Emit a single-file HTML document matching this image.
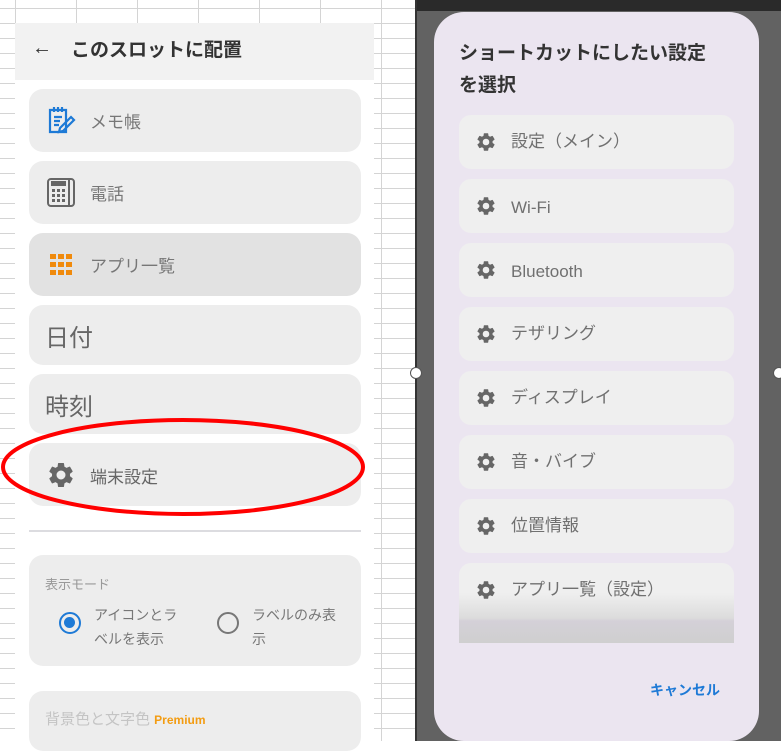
<!DOCTYPE html>
<html><head><meta charset="utf-8"><style>
*{margin:0;padding:0;box-sizing:border-box}
body{width:781px;height:741px;overflow:hidden;position:relative;background:#fff;font-family:"Liberation Sans","Noto Sans CJK JP",sans-serif}
.grid{position:absolute;left:0;top:0;width:417px;height:741px;
background-image:linear-gradient(#d4d4d4 1px,transparent 1px),linear-gradient(90deg,#d4d4d4 1px,transparent 1px);
background-size:100% 15px,61px 100%;background-position:0 8px,15px 0}
.panel{position:absolute;left:15px;top:23px;width:359px;height:718px;background:#fff}
.hdr{position:absolute;left:0;top:0;width:359px;height:57px;background:#f2f2f2}
.hdr .t{position:absolute;left:56px;top:12px;font-size:19px;font-weight:bold;color:#333}
.hdr .a{position:absolute;left:17px;top:14px;font-size:20px;color:#333}
.card{position:absolute;left:14px;width:332px;background:#ededed;border-radius:14px}
.card .l{position:absolute;left:61px;font-size:17px;color:#777}
.card svg{position:absolute;left:17px}
.right{position:absolute;left:417px;top:0;width:364px;height:741px;background:#626262}
.sb{position:absolute;left:0;top:0;width:364px;height:11px;background:#2a2a2a}
.dlg{position:absolute;left:17px;top:12px;width:325px;height:729px;background:#ebe5f0;border-radius:30px}
.dlg .t{position:absolute;left:25px;top:26px;font-size:19px;font-weight:bold;color:#333;line-height:32px}
.it{position:absolute;left:25px;width:275px;height:54px;background:#efefef;border-radius:12px}
.it svg{position:absolute;left:16px;top:16px}
.it span{position:absolute;left:52px;top:14px;font-size:17px;line-height:26px;color:#707070}
.h{position:absolute;width:12px;height:12px;border-radius:50%;background:#fff;border:1px solid #555}
</style></head><body>
<div class="grid"></div>
<div class="panel">
<div class="hdr"><div class="a">←</div><div class="t">このスロットに配置</div></div>
<div class="card" style="top:66px;height:63px">
<svg style="top:17px" width="30" height="30" viewBox="0 0 30 30" fill="none" stroke="#1e7ad6" stroke-width="2.2"><path d="M4 4h16v22H4zM8 1v5M12 1v5M16 1v5M8 11h8M8 15h6M8 19h5"/><path d="M14 22l11-11 3 3-11 11-4 1z"/></svg>
<div class="l" style="top:19px">メモ帳</div></div>
<div class="card" style="top:138px;height:63px">
<svg style="top:16px" width="30" height="30" viewBox="0 0 30 30" fill="none" stroke="#666" stroke-width="2"><rect x="2" y="2" width="26" height="27" rx="3"/><path d="M23 2v27"/><rect x="6" y="5" width="13" height="3" fill="#666"/><g fill="#666" stroke="none"><rect x="6" y="12" width="3" height="3"/><rect x="11" y="12" width="3" height="3"/><rect x="16" y="12" width="3" height="3"/><rect x="6" y="17" width="3" height="3"/><rect x="11" y="17" width="3" height="3"/><rect x="16" y="17" width="3" height="3"/><rect x="6" y="22" width="3" height="3"/><rect x="11" y="22" width="3" height="3"/><rect x="16" y="22" width="3" height="3"/></g></svg>
<div class="l" style="top:19px">電話</div></div>
<div class="card" style="top:210px;height:63px;background:#e2e2e2">
<svg style="top:21px;left:21px" width="22" height="22" viewBox="0 0 22 22" fill="#f08a0c"><rect x="0" y="0" width="6" height="5"/><rect x="8" y="0" width="6" height="5"/><rect x="16" y="0" width="6" height="5"/><rect x="0" y="8" width="6" height="5"/><rect x="8" y="8" width="6" height="5"/><rect x="16" y="8" width="6" height="5"/><rect x="0" y="16" width="6" height="5"/><rect x="8" y="16" width="6" height="5"/><rect x="16" y="16" width="6" height="5"/></svg>
<div class="l" style="top:19px">アプリ一覧</div></div>
<div class="card" style="top:282px;height:60px"><div class="l" style="left:16px;top:13px;font-size:24px;color:#666">日付</div></div>
<div class="card" style="top:351px;height:60px"><div class="l" style="left:16px;top:13px;font-size:24px;color:#666">時刻</div></div>
<div class="card" style="top:420px;height:63px">
<svg style="top:17px;left:17px" width="30" height="30" viewBox="0 0 24 24" fill="#666"><path d="M19.14 12.94c.04-.3.06-.61.06-.94s-.02-.64-.07-.94l2.03-1.58a.49.49 0 0 0 .12-.61l-1.92-3.320a.49.49 0 0 0-.59-.22l-2.39.96c-.5-.38-1.03-.7-1.62-.94l-.36-2.54a.48.48 0 0 0-.48-.41h-3.84c-.24 0-.43.17-.47.41l-.36 2.54c-.59.24-1.13.57-1.62.94l-2.39-.96a.48.48 0 0 0-.59.22L2.74 8.87a.47.47 0 0 0 .12.61l2.03 1.58c-.05.3-.09.63-.09.94s.02.64.07.94l-2.03 1.58a.49.49 0 0 0-.12.61l1.92 3.32c.12.22.37.29.59.22l2.39-.96c.5.38 1.03.7 1.62.94l.36 2.54c.05.24.24.41.48.41h3.84c.24 0 .44-.17.47-.41l.36-2.54c.59-.24 1.13-.56 1.62-.94l2.39.96c.22.08.47 0 .59-.22l1.92-3.32a.47.47 0 0 0-.12-.61l-2.01-1.58zM12 15.6A3.6 3.6 0 1 1 12 8.4a3.6 3.6 0 0 1 0 7.2z"/></svg>
<div class="l" style="top:20px;color:#666">端末設定</div></div>
<div style="position:absolute;left:14px;top:507px;width:332px;height:2px;background:#dcdce0"></div>
<div class="card" style="top:532px;height:111px">
<div style="position:absolute;left:16px;top:19px;font-size:13px;color:#999">表示モード</div>
<div style="position:absolute;left:30px;top:57px;width:22px;height:22px;border-radius:50%;border:2.5px solid #1e7ad6"><div style="margin:3px;width:11px;height:11px;border-radius:50%;background:#1e7ad6"></div></div>
<div style="position:absolute;left:65px;top:48px;font-size:14px;color:#777;line-height:24px;width:88px">アイコンとラベルを表示</div>
<div style="position:absolute;left:188px;top:57px;width:22px;height:22px;border-radius:50%;border:2.5px solid #777"></div>
<div style="position:absolute;left:223px;top:48px;font-size:14px;color:#777;line-height:24px;width:90px">ラベルのみ表示</div>
</div>
<div class="card" style="top:668px;height:60px">
<div style="position:absolute;left:16px;top:17px;font-size:15px;color:#c4c4c4">背景色と文字色 <span style="color:#f39c12;font-size:12px;font-weight:bold">Premium</span></div></div>
</div>
<svg style="position:absolute;left:0;top:415px" width="370" height="105"><ellipse cx="183" cy="52" rx="180" ry="47" fill="none" stroke="#f00" stroke-width="4"/></svg>
<div style="position:absolute;left:415px;top:0;width:2px;height:741px;background:#333"></div>
<div class="right">
<div class="sb"></div>
<div class="dlg">
<div class="t">ショートカットにしたい設定<br>を選択</div>
<div class="it" style="top:103px"><svg width="22" height="22" viewBox="0 0 24 24" fill="#666"><path d="M19.14 12.94c.04-.3.06-.61.06-.94s-.02-.64-.07-.94l2.03-1.58a.49.49 0 0 0 .12-.61l-1.92-3.32a.49.49 0 0 0-.59-.22l-2.39.96c-.5-.38-1.03-.7-1.62-.94l-.36-2.54a.48.48 0 0 0-.48-.41h-3.84c-.24 0-.43.17-.47.41l-.36 2.54c-.59.24-1.13.57-1.62.94l-2.39-.96a.48.48 0 0 0-.59.22L2.74 8.87a.47.47 0 0 0 .12.61l2.03 1.58c-.05.3-.09.63-.09.94s.02.64.07.94l-2.03 1.58a.49.49 0 0 0-.12.61l1.92 3.32c.12.22.37.29.59.22l2.39-.96c.5.38 1.03.7 1.62.94l.36 2.54c.05.24.24.41.48.41h3.84c.24 0 .44-.17.47-.41l.36-2.54c.59-.24 1.13-.56 1.62-.94l2.39.96c.22.08.47 0 .59-.22l1.92-3.32a.47.47 0 0 0-.12-.61l-2.01-1.58zM12 15.6A3.6 3.6 0 1 1 12 8.4a3.6 3.6 0 0 1 0 7.2z"/></svg><span>設定（メイン）</span></div>
<div class="it" style="top:167px"><svg width="22" height="22" viewBox="0 0 24 24" fill="#666"><path d="M19.14 12.94c.04-.3.06-.61.06-.94s-.02-.64-.07-.94l2.03-1.58a.49.49 0 0 0 .12-.61l-1.92-3.32a.49.49 0 0 0-.59-.22l-2.39.96c-.5-.38-1.03-.7-1.62-.94l-.36-2.54a.48.48 0 0 0-.48-.41h-3.84c-.24 0-.43.17-.47.41l-.36 2.54c-.59.24-1.13.57-1.62.94l-2.39-.96a.48.48 0 0 0-.59.22L2.74 8.87a.47.47 0 0 0 .12.61l2.03 1.58c-.05.3-.09.63-.09.94s.02.64.07.94l-2.03 1.58a.49.49 0 0 0-.12.61l1.92 3.32c.12.22.37.29.59.22l2.39-.96c.5.38 1.03.7 1.62.94l.36 2.54c.05.24.24.41.48.41h3.84c.24 0 .44-.17.47-.41l.36-2.54c.59-.24 1.13-.56 1.62-.94l2.39.96c.22.08.47 0 .59-.22l1.92-3.32a.47.47 0 0 0-.12-.61l-2.01-1.58zM12 15.6A3.6 3.6 0 1 1 12 8.4a3.6 3.6 0 0 1 0 7.2z"/></svg><span style="top:16px">Wi-Fi</span></div>
<div class="it" style="top:231px"><svg width="22" height="22" viewBox="0 0 24 24" fill="#666"><path d="M19.14 12.94c.04-.3.06-.61.06-.94s-.02-.64-.07-.94l2.03-1.58a.49.49 0 0 0 .12-.61l-1.92-3.32a.49.49 0 0 0-.59-.22l-2.39.96c-.5-.38-1.03-.7-1.62-.94l-.36-2.54a.48.48 0 0 0-.48-.41h-3.84c-.24 0-.43.17-.47.41l-.36 2.54c-.59.24-1.13.57-1.62.94l-2.39-.96a.48.48 0 0 0-.59.22L2.74 8.87a.47.47 0 0 0 .12.61l2.03 1.58c-.05.3-.09.63-.09.94s.02.64.07.94l-2.03 1.58a.49.49 0 0 0-.12.61l1.92 3.32c.12.22.37.29.59.22l2.39-.96c.5.38 1.03.7 1.62.94l.36 2.54c.05.24.24.41.48.41h3.84c.24 0 .44-.17.47-.41l.36-2.54c.59-.24 1.13-.56 1.62-.94l2.39.96c.22.08.47 0 .59-.22l1.92-3.32a.47.47 0 0 0-.12-.61l-2.01-1.58zM12 15.6A3.6 3.6 0 1 1 12 8.4a3.6 3.6 0 0 1 0 7.2z"/></svg><span style="top:16px">Bluetooth</span></div>
<div class="it" style="top:295px"><svg width="22" height="22" viewBox="0 0 24 24" fill="#666"><path d="M19.14 12.94c.04-.3.06-.61.06-.94s-.02-.64-.07-.94l2.03-1.58a.49.49 0 0 0 .12-.61l-1.92-3.32a.49.49 0 0 0-.59-.22l-2.39.96c-.5-.38-1.03-.7-1.62-.94l-.36-2.54a.48.48 0 0 0-.48-.41h-3.84c-.24 0-.43.17-.47.41l-.36 2.54c-.59.24-1.13.57-1.62.94l-2.39-.96a.48.48 0 0 0-.59.22L2.74 8.87a.47.47 0 0 0 .12.61l2.03 1.58c-.05.3-.09.63-.09.94s.02.64.07.94l-2.03 1.58a.49.49 0 0 0-.12.61l1.92 3.32c.12.22.37.29.59.22l2.39-.96c.5.38 1.03.7 1.62.94l.36 2.54c.05.24.24.41.48.41h3.84c.24 0 .44-.17.47-.41l.36-2.54c.59-.24 1.13-.56 1.62-.94l2.39.96c.22.08.47 0 .59-.22l1.92-3.32a.47.47 0 0 0-.12-.61l-2.01-1.58zM12 15.6A3.6 3.6 0 1 1 12 8.4a3.6 3.6 0 0 1 0 7.2z"/></svg><span>テザリング</span></div>
<div class="it" style="top:359px"><svg width="22" height="22" viewBox="0 0 24 24" fill="#666"><path d="M19.14 12.94c.04-.3.06-.61.06-.94s-.02-.64-.07-.94l2.03-1.58a.49.49 0 0 0 .12-.61l-1.92-3.32a.49.49 0 0 0-.59-.22l-2.39.96c-.5-.38-1.03-.7-1.62-.94l-.36-2.54a.48.48 0 0 0-.48-.41h-3.84c-.24 0-.43.17-.47.41l-.36 2.54c-.59.24-1.13.57-1.62.94l-2.39-.96a.48.48 0 0 0-.59.22L2.74 8.87a.47.47 0 0 0 .12.61l2.03 1.58c-.05.3-.09.63-.09.94s.02.64.07.94l-2.03 1.58a.49.49 0 0 0-.12.61l1.92 3.32c.12.22.37.29.59.22l2.39-.96c.5.38 1.03.7 1.62.94l.36 2.54c.05.24.24.41.48.41h3.84c.24 0 .44-.17.47-.41l.36-2.54c.59-.24 1.13-.56 1.62-.94l2.39.96c.22.08.47 0 .59-.22l1.92-3.32a.47.47 0 0 0-.12-.61l-2.01-1.58zM12 15.6A3.6 3.6 0 1 1 12 8.4a3.6 3.6 0 0 1 0 7.2z"/></svg><span>ディスプレイ</span></div>
<div class="it" style="top:423px"><svg width="22" height="22" viewBox="0 0 24 24" fill="#666"><path d="M19.14 12.94c.04-.3.06-.61.06-.94s-.02-.64-.07-.94l2.03-1.58a.49.49 0 0 0 .12-.61l-1.92-3.32a.49.49 0 0 0-.59-.22l-2.39.96c-.5-.38-1.03-.7-1.62-.94l-.36-2.54a.48.48 0 0 0-.48-.41h-3.84c-.24 0-.43.17-.47.41l-.36 2.54c-.59.24-1.13.57-1.62.94l-2.39-.96a.48.48 0 0 0-.59.22L2.74 8.87a.47.47 0 0 0 .12.61l2.03 1.58c-.05.3-.09.63-.09.94s.02.64.07.94l-2.03 1.58a.49.49 0 0 0-.12.61l1.92 3.32c.12.22.37.29.59.22l2.39-.96c.5.38 1.03.7 1.62.94l.36 2.54c.05.24.24.41.48.41h3.84c.24 0 .44-.17.47-.41l.36-2.54c.59-.24 1.13-.56 1.62-.94l2.39.96c.22.08.47 0 .59-.22l1.92-3.32a.47.47 0 0 0-.12-.61l-2.01-1.58zM12 15.6A3.6 3.6 0 1 1 12 8.4a3.6 3.6 0 0 1 0 7.2z"/></svg><span>音・バイブ</span></div>
<div class="it" style="top:487px"><svg width="22" height="22" viewBox="0 0 24 24" fill="#666"><path d="M19.14 12.94c.04-.3.06-.61.06-.94s-.02-.64-.07-.94l2.03-1.58a.49.49 0 0 0 .12-.61l-1.92-3.32a.49.49 0 0 0-.59-.22l-2.39.96c-.5-.38-1.03-.7-1.62-.94l-.36-2.54a.48.48 0 0 0-.48-.41h-3.84c-.24 0-.43.17-.47.41l-.36 2.54c-.59.24-1.13.57-1.62.94l-2.39-.96a.48.48 0 0 0-.59.22L2.74 8.87a.47.47 0 0 0 .12.61l2.03 1.58c-.05.3-.09.63-.09.94s.02.64.07.94l-2.03 1.58a.49.49 0 0 0-.12.61l1.92 3.32c.12.22.37.29.59.22l2.39-.96c.5.38 1.03.7 1.62.94l.36 2.54c.05.24.24.41.48.41h3.84c.24 0 .44-.17.47-.41l.36-2.54c.59-.24 1.13-.56 1.62-.94l2.39.96c.22.08.47 0 .59-.22l1.92-3.32a.47.47 0 0 0-.12-.61l-2.01-1.58zM12 15.6A3.6 3.6 0 1 1 12 8.4a3.6 3.6 0 0 1 0 7.2z"/></svg><span>位置情報</span></div>
<div class="it" style="top:551px;height:80px;border-radius:12px 12px 0 0;background:linear-gradient(#efefef 0,#efefef 30px,#dcdcdc 55px,#d4d0d8 58px,#cfcfcf 80px)"><svg width="22" height="22" viewBox="0 0 24 24" fill="#666"><path d="M19.14 12.94c.04-.3.06-.61.06-.94s-.02-.64-.07-.94l2.03-1.58a.49.49 0 0 0 .12-.61l-1.92-3.32a.49.49 0 0 0-.59-.22l-2.39.96c-.5-.38-1.03-.7-1.62-.94l-.36-2.54a.48.48 0 0 0-.48-.41h-3.84c-.24 0-.43.17-.47.41l-.36 2.54c-.59.24-1.13.57-1.62.94l-2.39-.96a.48.48 0 0 0-.59.22L2.74 8.87a.47.47 0 0 0 .12.61l2.03 1.58c-.05.3-.09.63-.09.94s.02.64.07.94l-2.03 1.58a.49.49 0 0 0-.12.61l1.92 3.32c.12.22.37.29.59.22l2.39-.96c.5.38 1.03.7 1.62.94l.36 2.54c.05.24.24.41.48.41h3.84c.24 0 .44-.17.47-.41l.36-2.54c.59-.24 1.13-.56 1.62-.94l2.39.96c.22.08.47 0 .59-.22l1.92-3.32a.47.47 0 0 0-.12-.61l-2.01-1.58zM12 15.6A3.6 3.6 0 1 1 12 8.4a3.6 3.6 0 0 1 0 7.2z"/></svg><span>アプリ一覧（設定）</span></div>
<div style="position:absolute;left:216px;top:668px;font-size:14px;color:#1e7ad6;font-weight:bold">キャンセル</div>
</div>
</div>
<div class="h" style="left:410px;top:367px"></div>
<div class="h" style="left:773px;top:367px"></div>
</body></html>
